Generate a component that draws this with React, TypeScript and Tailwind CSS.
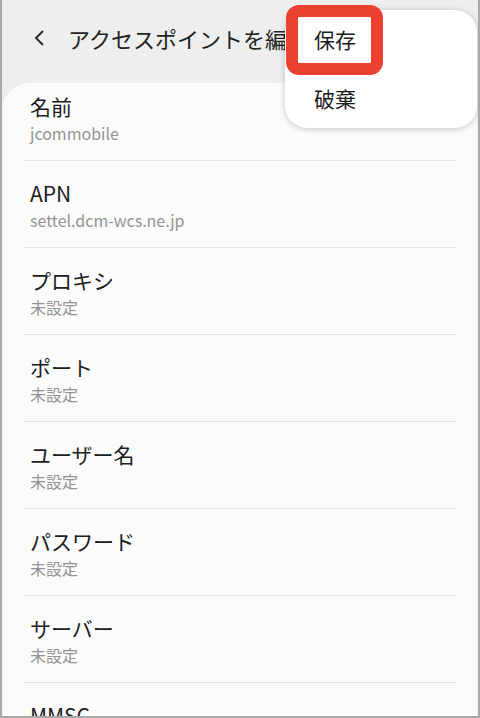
const rows: { title: string; value: string }[] = [
  { title: "名前", value: "jcommobile" },
  { title: "APN", value: "settel.dcm-wcs.ne.jp" },
  { title: "プロキシ", value: "未設定" },
  { title: "ポート", value: "未設定" },
  { title: "ユーザー名", value: "未設定" },
  { title: "パスワード", value: "未設定" },
  { title: "サーバー", value: "未設定" },
  { title: "MMSC", value: "未設定" },
];

const font = { fontFamily: '"Noto Sans CJK JP", Roboto, "Noto Sans", sans-serif' };

export default function App() {
  return (
    <div
      className="relative w-[480px] h-[718px] overflow-hidden bg-[#eeeeee] border-x-2 border-b-2 border-[#a9a9a9]"
      style={font}
    >
      {/* header */}
      <div className="h-[83px]">
        <div className="flex h-[76px] items-center">
          <svg
            width="18"
            height="20"
            viewBox="0 0 18 20"
            className="ml-[29px] text-[#222]"
            fill="none"
            stroke="currentColor"
            strokeWidth="1.8"
          >
            <polyline points="12,3 5,10 12,17" />
          </svg>
          <span className="ml-[19px] whitespace-nowrap text-[22px] text-[#222]">
            アクセスポイントを編集
          </span>
        </div>
      </div>

      {/* list card */}
      <div className="mx-px rounded-t-[26px] bg-[#fbfbfb]">
        <div className="mx-[21px]">
          {rows.map((r, i) => (
            <div
              key={r.title}
              className={
                "border-b border-[#e2e2e2] px-[6px] pb-[17px] " +
                (i === 0 ? "pt-[9px]" : "pt-[18px]")
              }
            >
              <div className="text-[21px] leading-[28px] text-[#1c1c1c]">{r.title}</div>
              <div className="mt-[3px] text-[16px] leading-[20px] text-[#939393]">
                {r.value}
              </div>
            </div>
          ))}
        </div>
      </div>

      {/* overflow menu */}
      <div className="absolute left-[283px] top-[10px] flex h-[118px] w-[192px] flex-col rounded-[22px] bg-white pl-[29px] shadow-[0_1px_6px_rgba(0,0,0,0.22)]">
        <div className="flex h-[60px] items-center text-[21px] text-[#1c1c1c]">保存</div>
        <div className="flex h-[58px] items-center text-[21px] text-[#1c1c1c]">破棄</div>
      </div>

      {/* highlight */}
      <div className="absolute left-[284px] top-[5px] h-[70px] w-[97px] rounded-[13px] border-[12px] border-[#ea4130]" />
    </div>
  );
}
